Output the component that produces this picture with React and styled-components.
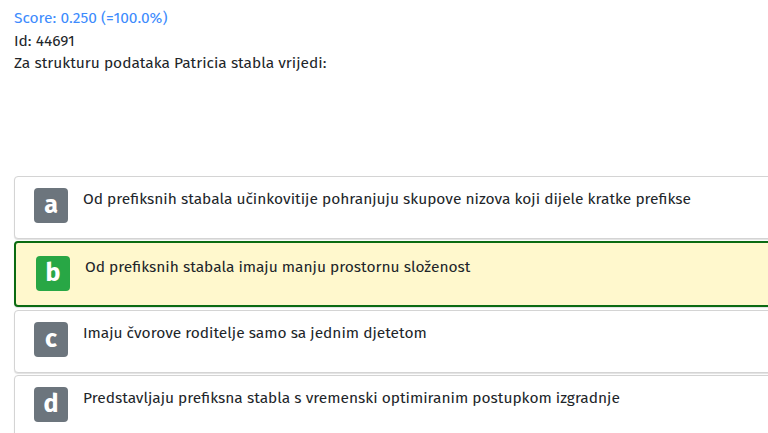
import React from "react";
import styled, { createGlobalStyle } from "styled-components";

const GlobalStyle = createGlobalStyle`
  html, body {
    margin: 0;
    padding: 0;
    background: #fff;
    overflow: hidden;
  }
  body {
    font-family: "Fira Sans", "Noto Sans", "Open Sans", sans-serif;
    font-size: 15.5px;
    line-height: 22.5px;
    color: #212529;
  }
`;

const Page = styled.div`
  padding: 7px 0 0 14px;
  width: 800px;
`;

const Score = styled.div`
  color: #3d8bfd;
`;

const Line = styled.div``;

const Answers = styled.div`
  display: flex;
  flex-direction: column;
  gap: 2px;
  margin-top: 101px;
`;

const Card = styled.div`
  display: flex;
  align-items: flex-start;
  gap: 15px;
  border-radius: 4px;
  background: ${(p) => (p.selected ? "#fff8cd" : "#fff")};
  border: ${(p) => (p.selected ? "2px solid #0b6b12" : "1px solid #d4d4d4")};
  padding: ${(p) => (p.selected ? "13px 20px 14px" : "11px 19px 15px")};
  margin-bottom: ${(p) => (p.selected ? "1px" : "0")};
  box-shadow: 0 1px 1px rgba(0, 0, 0, 0.12);
`;

const Badge = styled.span`
  flex: none;
  width: 34px;
  height: 35px;
  border-radius: 4px;
  background: ${(p) => (p.selected ? "#28a745" : "#6c757d")};
  color: #fff;
  font-weight: 700;
  font-size: 25px;
  line-height: 35px;
  text-align: center;
`;

const AnswerText = styled.span`
  padding-top: 0;
`;

const answers = [
  { key: "a", text: "Od prefiksnih stabala učinkovitije pohranjuju skupove nizova koji dijele kratke prefikse" },
  { key: "b", text: "Od prefiksnih stabala imaju manju prostornu složenost", selected: true },
  { key: "c", text: "Imaju čvorove roditelje samo sa jednim djetetom" },
  { key: "d", text: "Predstavljaju prefiksna stabla s vremenski optimiranim postupkom izgradnje" },
];

export default function App() {
  return (
    <>
      <GlobalStyle />
      <Page>
        <Score>Score: 0.250 (=100.0%)</Score>
        <Line>Id: 44691</Line>
        <Line>Za strukturu podataka Patricia stabla vrijedi:</Line>
        <Answers>
          {answers.map((a) => (
            <Card key={a.key} selected={a.selected}>
              <Badge selected={a.selected}>{a.key}</Badge>
              <AnswerText>{a.text}</AnswerText>
            </Card>
          ))}
        </Answers>
      </Page>
    </>
  );
}
